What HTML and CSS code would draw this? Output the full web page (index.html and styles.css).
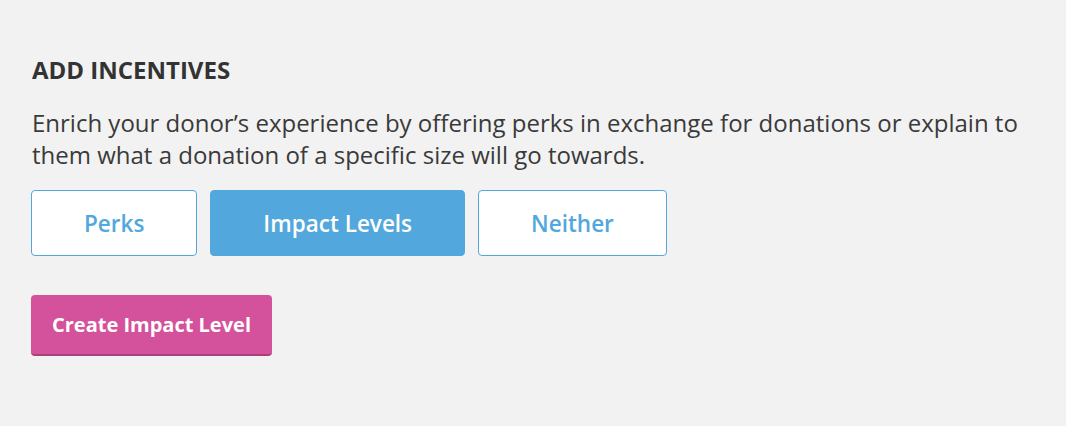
FILE: index.html
```html
<!DOCTYPE html>
<html>
<head>
<meta charset="utf-8">
<link rel="stylesheet" href="styles.css">
</head>
<body>
<section class="incentives">
  <h2 class="title">ADD INCENTIVES</h2>
  <p class="desc">Enrich your donor’s experience by offering perks in exchange for donations or explain to them what a donation of a specific size will go towards.</p>
  <div class="toggle-group">
    <button class="toggle">Perks</button>
    <button class="toggle active">Impact Levels</button>
    <button class="toggle">Neither</button>
  </div>
  <button class="create">Create Impact Level</button>
</section>
</body>
</html>
```
FILE: styles.css
```css
html, body {
  margin: 0;
  padding: 0;
  background: #f2f2f2;
}
.incentives {
  padding: 54px 32px 0 31px;
  font-family: "Open Sans", sans-serif;
  color: #333333;
}
.title {
  margin: 0 0 0 1px;
  font-size: 24px;
  line-height: 32px;
  font-weight: 700;
  color: #333333;
}
.desc {
  margin: 21px 0 19px 1px;
  font-size: 24px;
  line-height: 32px;
  font-weight: 400;
  color: #3a3a3a;
}
.toggle-group {
  display: flex;
  gap: 13px;
}
.toggle {
  height: 66px;
  padding: 0 52px;
  border: 1px solid #52a7dc;
  border-radius: 4px;
  background: #ffffff;
  color: #52a7dc;
  font-family: "Open Sans", sans-serif;
  font-size: 22.5px;
  font-weight: 600;
  cursor: pointer;
}
.toggle.active {
  background: #52a7dc;
  color: #ffffff;
}
.create {
  margin-top: 39px;
  height: 61px;
  padding: 0 21px;
  border: none;
  border-bottom: 2px solid #a93f7c;
  border-radius: 4px;
  background: #d4529b;
  color: #ffffff;
  font-family: "Open Sans", sans-serif;
  font-size: 20px;
  font-weight: 700;
  cursor: pointer;
}
```
